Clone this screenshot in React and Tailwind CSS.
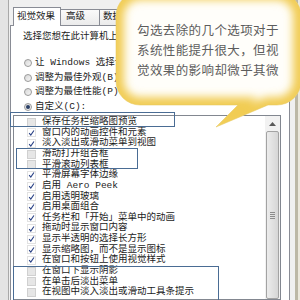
import React from "react";

const items = [
  ["保存任务栏缩略图预览", false],
  ["窗口内的动画控件和元素", true],
  ["淡入淡出或滑动菜单到视图", true],
  ["滑动打开组合框", false],
  ["平滑滚动列表框", false],
  ["平滑屏幕字体边缘", true],
  ["启用 Aero Peek", true],
  ["启用透明玻璃", true],
  ["启用桌面组合", true],
  ["任务栏和「开始」菜单中的动画", true],
  ["拖动时显示窗口内容", true],
  ["显示半透明的选择长方形", true],
  ["显示缩略图，而不是显示图标", true],
  ["在窗口和按钮上使用视觉样式", true],
  ["在窗口下显示阴影", false],
  ["在单击后淡出菜单", false],
  ["在视图中淡入淡出或滑动工具条提示", false],
];

const radios = [
  ["让 Windows 选择计算机的最佳设置(L)", false],
  ["调整为最佳外观(B)", false],
  ["调整为最佳性能(P)", false],
  ["自定义(C):", true],
];

function Radio({ on }) {
  return (
    <span className="flex h-[8px] w-[8px] shrink-0 items-center justify-center rounded-full border border-[#9a9a9a] bg-gradient-to-br from-[#d8d8d8] to-[#f6f6f6]">
      {on && <span className="h-[4px] w-[4px] rounded-full bg-[#2a3f66]" />}
    </span>
  );
}

function Check({ on }) {
  return (
    <span
      className={
        "flex h-[9px] w-[9px] items-center justify-center border " +
        (on ? "border-[#e2e2e2] bg-white" : "border-[#d0d0d0] bg-[#e6e6e6]")
      }
    >
      {on && (
        <svg width="8" height="8" viewBox="0 0 8 8">
          <path d="M1.3 4.2 L3.2 6.4 L6.8 1.2" fill="none" stroke="#2a4286" strokeWidth="1.3" />
        </svg>
      )}
    </span>
  );
}

// yellow speech bubble that lies over the top of the dialog
function Callout() {
  const d =
    "M140 -8 H277 A24 24 0 0 1 301 16 V81 A24 24 0 0 1 277 105 H268 L216 127 L238 105 H140 A24 24 0 0 1 116 81 V16 A24 24 0 0 1 140 -8 Z";
  return (
    <svg className="pointer-events-none absolute left-0 top-0" width="300" height="140">
      <defs>
        <clipPath id="bubble">
          <path d={d} />
        </clipPath>
        <filter id="soft" x="-20%" y="-20%" width="140%" height="140%">
          <feGaussianBlur stdDeviation="4.5" />
        </filter>
      </defs>
      <g clipPath="url(#bubble)">
        <rect x="100" y="-20" width="220" height="160" fill="#fffefa" />
        <path d={d} fill="none" stroke="#f1cc52" strokeWidth="16" filter="url(#soft)" />
      </g>
      <path d={d} fill="none" stroke="#e8c85e" strokeOpacity="0.55" strokeWidth="1" />
    </svg>
  );
}

export default function App() {
  return (
    <div
      className="relative h-[300px] w-[300px] overflow-hidden bg-[#f0f0f0] text-[9.5px] text-[#1b1b1b]"
      style={{ fontFamily: '"Liberation Mono","Noto Sans CJK SC",monospace' }}
    >
      <div className="flex h-full">
        <div className="w-[9px] shrink-0 border-r border-[#a9a9a9] bg-[#e4e4e4]" />

        <div className="flex w-[281px] shrink-0 flex-col pl-[1px] pt-[7px]">
          <div className="ml-[3px] flex h-[18px] items-start">
            <div className="relative z-10 -mb-px flex h-[19px] w-[48px] items-center border-x border-t border-[#898c95] bg-white pl-[3px]">
              视觉效果
            </div>
            <div className="mt-[2px] flex h-[16px] w-[39px] items-center border-t border-r border-[#898c95] bg-gradient-to-b from-[#fafafa] to-[#ebebeb] pl-[5px]">
              高级
            </div>
            <div className="mt-[2px] flex h-[16px] w-[90px] items-center border-t border-r border-[#898c95] bg-gradient-to-b from-[#fafafa] to-[#ebebeb] pl-[3px]">
              数据执行保护
            </div>
          </div>

          <div className="flex flex-1 flex-col border border-[#898c95] bg-white">
            <p className="pl-[12px] pt-[5px] leading-[12px] whitespace-nowrap">
              选择您想在此计算机上使用的 Windows 外观和性能设置。
            </p>

            <div className="mt-[13px] flex flex-col pl-[13px]">
              {radios.map(([label, on]) => (
                <div key={label} className="flex h-[14.5px] items-center gap-[3px] whitespace-nowrap">
                  <Radio on={on} />
                  <span>{label}</span>
                </div>
              ))}
            </div>

            <div className="ml-[2px] mr-[8px] mt-[1px] flex flex-1 border border-[#828790] bg-white">
              <div className="flex flex-1 flex-col pl-[13px] pt-[1px]">
                {items.map(([label, on]) => (
                  <div key={label} className="flex h-[10.625px] items-center gap-[6px] whitespace-nowrap">
                    <Check on={on} />
                    <span>{label}</span>
                  </div>
                ))}
              </div>
              <div className="flex w-[15px] shrink-0 flex-col items-center bg-[#f2f2f2] pt-[2px]">
                <div className="flex h-[12px] items-center">
                  <svg width="7" height="4" viewBox="0 0 7 4">
                    <path d="M0 4 L3.5 0 L7 4 Z" fill="#5a5a5a" />
                  </svg>
                </div>
                <div className="mt-[1px] flex h-[168px] w-[13px] items-center justify-center rounded-[2px] border border-[#a3a3a3] bg-gradient-to-r from-[#ececec] to-[#d6d6d6]">
                  <div className="flex flex-col gap-[1px]">
                    <span className="h-px w-[5px] bg-[#8c8c8c]" />
                    <span className="h-px w-[5px] bg-[#8c8c8c]" />
                    <span className="h-px w-[5px] bg-[#8c8c8c]" />
                    <span className="h-px w-[5px] bg-[#8c8c8c]" />
                  </div>
                </div>
              </div>
            </div>
          </div>
        </div>

        <div className="flex flex-1">
          <div className="w-[5px] bg-[#f0f0f0]" />
          <div className="w-[3px] bg-[#bcb8a6]" />
          <div className="flex-1 bg-[#ebe8dc]" />
        </div>
      </div>

      <div className="absolute left-[10px] top-[112px] h-[15px] w-[165px] border-[1.5px] border-[#4a6c94]" />
      <div className="absolute left-[16px] top-[148px] h-[21px] w-[122px] border-[1.5px] border-[#4a6c94]" />
      <div className="absolute left-[13px] top-[266px] h-[50px] w-[206px] border-[1.5px] border-[#4a6c94]" />

      <Callout />

      <div
        className="absolute left-[137px] top-[20px] flex flex-col text-[12.5px] leading-[20px] tracking-[0.4px] text-[#5c5c5c]"
        style={{ fontFamily: '"Noto Sans CJK SC",sans-serif' }}
      >
        <span>勾选去除的几个选项对于</span>
        <span>系统性能提升很大，但视</span>
        <span>觉效果的影响却微乎其微</span>
      </div>
    </div>
  );
}
